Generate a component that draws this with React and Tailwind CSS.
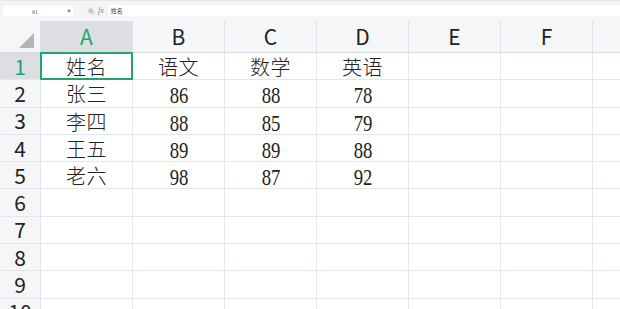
import React from "react";

const cols = ["A", "B", "C", "D", "E", "F", "G"];

const data = [
  ["姓名", "语文", "数学", "英语"],
  ["张三", "86", "88", "78"],
  ["李四", "88", "85", "79"],
  ["王五", "89", "89", "88"],
  ["老六", "98", "87", "92"],
];

function Cell({ value }) {
  if (!value) return null;
  const isNum = /^\d+$/.test(value);
  if (isNum) {
    return (
      <span className="inline-block translate-y-[2px] scale-x-[0.78] text-[24px] leading-none text-[#222] [font-family:'Liberation_Serif',serif]">
        {value}
      </span>
    );
  }
  return (
    <span className="inline-block translate-y-[1px] text-[20px] font-light leading-none tracking-[0.5px] text-[#222] [font-family:'Noto_Sans_CJK_SC',sans-serif]">
      {value}
    </span>
  );
}

export default function App() {
  const rows = Array.from({ length: 10 }, (_, i) => i + 1);

  return (
    <div className="w-[620px] h-[309px] overflow-hidden bg-white [font-family:'Noto_Sans_CJK_SC',sans-serif]">
      {/* formula bar */}
      <div className="flex h-[16px] items-end border-t border-[#e4e6ea] bg-[#f3f4f6] pt-[5px]">
        <div className="ml-[3px] flex h-[10px] w-[70px] items-center bg-white">
          <span className="flex-1 text-center text-[5px] leading-none text-[#555]">A1</span>
          <span className="mr-[2px] text-[4px] leading-none text-[#888]">▼</span>
        </div>
        <div className="ml-[15px] flex h-[10px] items-center gap-[3px]">
          <svg width="7" height="7" viewBox="0 0 12 12" fill="none" stroke="#9aa0a6" strokeWidth="1.2">
            <circle cx="5" cy="5" r="3.8" />
            <path d="M3 5h4M5 3v4M8 8l3 3" />
          </svg>
          <span className="text-[8px] italic leading-none text-[#888] [font-family:'Liberation_Serif',serif]">fx</span>
        </div>
        <div className="ml-[4px] flex h-[11px] flex-1 items-center bg-white pl-[3px]">
          <span className="text-[6px] leading-none text-[#444]">姓名</span>
        </div>
      </div>

      {/* column header */}
      <div className="h-[5px] bg-[#f5f6f8]" />
      <div className="flex h-[32px] border-b border-[#d6d9e0] bg-[#f5f6f8]">
        <div className="relative w-[41px] shrink-0 border-r border-[#dfe2e8]">
          <div className="absolute bottom-[4px] right-[6px] h-0 w-0 border-b-[15px] border-l-[15px] border-b-[#b5b5b5] border-l-transparent" />
        </div>
        {cols.map((c) => (
          <div
            key={c}
            className={`flex w-[92px] shrink-0 items-center justify-center border-r border-[#dfe2e8] text-[21px] leading-none ${
              c === "A" ? "bg-[#dcdee2] text-[#1ca672]" : "text-[#222]"
            }`}
          >
            {c}
          </div>
        ))}
      </div>

      {/* grid rows */}
      {rows.map((r) => (
        <div key={r} className="flex h-[27.3px] border-b border-[#e3e6ed]">
          <div
            className={`flex w-[41px] shrink-0 items-center justify-center border-r border-[#dfe2e8] text-[21px] leading-none ${
              r === 1 ? "bg-[#dcdee2] text-[#1ca672]" : "bg-[#f5f6f8] text-[#222]"
            }`}
          >
            {r}
          </div>
          {cols.map((c, ci) => (
            <div
              key={c}
              className="relative flex w-[92px] shrink-0 items-center justify-center border-r border-[#e3e6ed]"
            >
              <Cell value={data[r - 1] ? data[r - 1][ci] : ""} />
              {r === 1 && ci === 0 && (
                <div className="absolute inset-[-1px] border-2 border-[#22a56d]" />
              )}
            </div>
          ))}
        </div>
      ))}
    </div>
  );
}
